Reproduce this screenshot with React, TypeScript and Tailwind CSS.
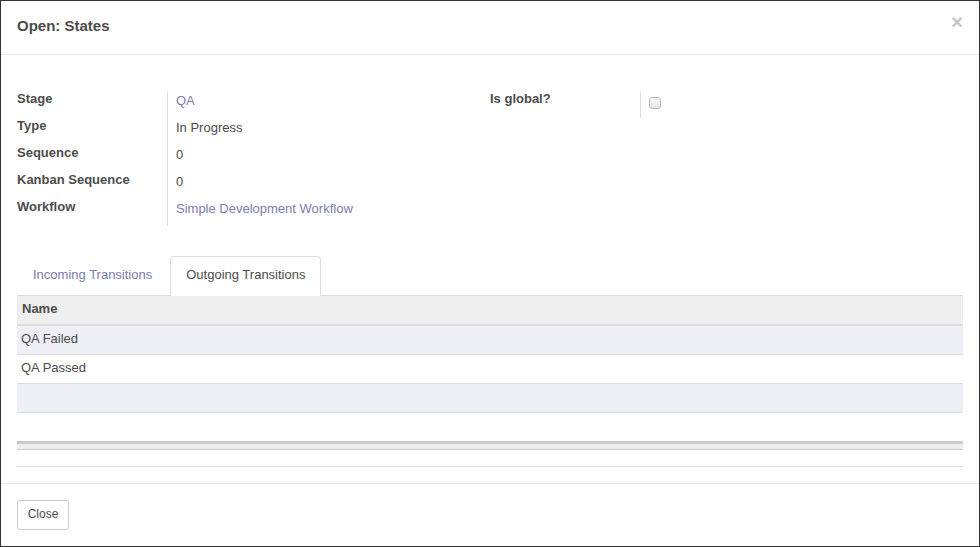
const font = { fontFamily: '"Liberation Sans", Arial, sans-serif' };

const fields = [
  { label: "Stage", value: "QA", link: true },
  { label: "Type", value: "In Progress" },
  { label: "Sequence", value: "0" },
  { label: "Kanban Sequence", value: "0" },
  { label: "Workflow", value: "Simple Development Workflow", link: true },
];

const rows = ["QA Failed", "QA Passed", ""];

function FieldRow({ label, value, link }: { label: string; value: string; link?: boolean }) {
  return (
    <div className="flex h-[27px]">
      <div className="w-[150px] shrink-0 text-[13px] font-bold leading-[16px] text-[#4c4c4c]">{label}</div>
      <div
        className={`border-l border-[#ddd] pl-2 pt-[2px] text-[13px] leading-[16px] ${
          link ? "text-[#7c7bad]" : "text-[#4c4c4c]"
        }`}
      >
        {value}
      </div>
    </div>
  );
}

export default function App() {
  return (
    <div style={font} className="flex h-[547px] w-[980px] flex-col border border-[#333] bg-white text-[#4c4c4c]">
      {/* Header */}
      <div className="flex h-[54px] shrink-0 items-center justify-between border-b border-[#e5e5e5] pl-4 pr-[16px]">
        <h4 className="pb-[3px] text-[15px] font-bold text-[#4c4c4c]">Open: States</h4>
        <span className="-mt-[12px] text-[20px] font-bold leading-none text-[#c4c4c4]">×</span>
      </div>

      {/* Body */}
      <div className="flex flex-1 flex-col px-4 pt-[36px]">
        <div className="flex">
          <div className="w-[473px]">
            {fields.map((f) => (
              <FieldRow key={f.label} {...f} />
            ))}
          </div>
          <div className="w-[473px]">
            <div className="flex h-[27px]">
              <div className="w-[150px] shrink-0 text-[13px] font-bold leading-[16px] text-[#4c4c4c]">Is global?</div>
              <div className="border-l border-[#ddd] pl-2 pt-[6px]">
                <div className="h-[12px] w-[12px] rounded-[3px] border border-[#bbb] bg-gradient-to-b from-[#fafafa] to-[#e6e6e6]" />
              </div>
            </div>
          </div>
        </div>

        {/* Tabs */}
        <div className="mt-[30px] flex border-b border-[#ddd]">
          <div className="-mb-px mr-[2px] h-[39px] border border-transparent px-[15px] text-[13px] leading-[35px] text-[#7c7bad]">
            Incoming Transitions
          </div>
          <div className="-mb-px h-[40px] rounded-t-[4px] border border-[#ddd] border-b-white bg-white px-[15px] text-[13px] leading-[35px] text-[#4c4c4c]">
            Outgoing Transitions
          </div>
        </div>

        {/* Table */}
        <div className="flex h-[30px] items-center border-b-2 border-[#ddd] bg-[#eee] px-[5px] pb-[3px] text-[13px] font-bold text-[#4c4c4c]">
          Name
        </div>
        {rows.map((r, i) => (
          <div
            key={i}
            className={`flex h-[29px] items-center border-b border-[#ddd] px-[4px] pb-[3px] text-[13px] text-[#4c4c4c] ${
              i % 2 === 0 ? "bg-[#eeeef6]" : "bg-white"
            }`}
          >
            {r}
          </div>
        ))}
        <div className="h-[28px]" />
        <div className="h-[9px] border-t-[3px] border-b border-t-[#ccc] border-b-[#ccc] bg-[#eee]" />
        <div className="h-[17px] border-b border-[#ddd]" />
      </div>

      {/* Footer */}
      <div className="h-[63px] shrink-0 border-t border-[#e5e5e5] px-4 pt-4">
        <button className="h-[30px] w-[52px] rounded-[3px] border border-[#ccc] bg-white pb-[3px] text-[12px] text-[#4c4c4c]">
          Close
        </button>
      </div>
    </div>
  );
}
